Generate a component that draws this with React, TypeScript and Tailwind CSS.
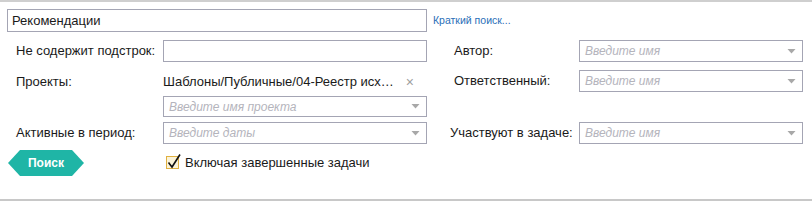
import React from "react";

const font = { fontFamily: '"Liberation Sans", Arial, sans-serif' };

function Arrow() {
  return (
    <svg width="9" height="5" viewBox="0 0 9 5" className="shrink-0">
      <path d="M0.5 0 L8.5 0 L4.5 4.5 Z" fill="#a8a8a8" />
    </svg>
  );
}

function Select({ placeholder, w, h = "h-[22px]" }: { placeholder: string; w: string; h?: string }) {
  return (
    <div className={`${w} ${h} border border-[#a4a5b4] bg-white flex items-center pl-[5px] pr-[6px]`}>
      <span className="flex-1 italic text-[12px] text-[#b4b4bc]">{placeholder}</span>
      <Arrow />
    </div>
  );
}

export default function App() {
  return (
    <div className="w-[812px] h-[201px] bg-white relative overflow-hidden text-[#1a1a1a]" style={font}>
      <div className="h-[2px] bg-[#cfcfcf]" />
      <div className="flex items-center pl-[7px] pt-[7px]">
        <div className="w-[420px] h-[23px] border border-[#a4a5b4] flex items-center pl-[4px] text-[13px]">
          Рекомендации
        </div>
        <span className="ml-[6px] text-[10.5px] text-[#2a6fb8]">Краткий поиск...</span>
      </div>
      <div className="grid grid-cols-[147px_264px_23px_129px_224px] grid-rows-[30px_26px_26px_22px] items-start pl-[16px] mt-[8px] text-[13px]">
        {/* row 1 */}
        <div className="h-[22px] flex items-center">Не содержит подстрок:</div>
        <div className="h-[22px] border border-[#a4a5b4]" />
        <div />
        <div className="h-[22px] flex items-center pl-[4px]">Автор:</div>
        <Select placeholder="Введите имя" w="w-[224px]" />
        {/* row 2 */}
        <div className="h-[22px] flex items-center pt-[2px]">Проекты:</div>
        <div className="h-[22px] flex items-center pt-[2px] pr-[13px]">
          <span className="flex-1">Шаблоны/Публичные/04-Реестр исх…</span>
          <span className="text-[#a0a0a0] text-[14px] leading-none">×</span>
        </div>
        <div />
        <div className="h-[22px] flex items-center pl-[4px]">Ответственный:</div>
        <Select placeholder="Введите имя" w="w-[224px]" />
        {/* row 3 */}
        <div />
        <Select placeholder="Введите имя проекта" w="w-[264px]" h="h-[21px]" />
        <div />
        <div />
        <div />
        {/* row 4 */}
        <div className="h-[22px] flex items-center">Активные в период:</div>
        <Select placeholder="Введите даты" w="w-[264px]" />
        <div />
        <div className="h-[22px] flex items-center">Участвуют в задаче:</div>
        <Select placeholder="Введите имя" w="w-[224px]" />
      </div>
      <div className="flex items-start mt-[6px] pl-[8px]">
        <div className="w-[76px] h-[26px] bg-[#1fb5a6] flex items-center justify-center text-white font-bold text-[12px] [clip-path:polygon(12px_0,64px_0,76px_50%,64px_100%,12px_100%,0_50%)]">
          Поиск
        </div>
        <div className="ml-[82px] mt-[3px] flex items-center">
          <div className="w-[13px] h-[13px] border border-[#e0b040] bg-[#fbf3d8] relative">
            <svg width="16" height="16" viewBox="0 0 16 16" className="absolute -left-[1px] -top-[4px]">
              <path d="M2.5 9.5 L6 14 L14 1.5" stroke="#111" strokeWidth="1.6" fill="none" />
            </svg>
          </div>
          <span className="ml-[6px] text-[13px]">Включая завершенные задачи</span>
        </div>
      </div>
      <div className="absolute bottom-0 left-0 right-0 h-[2px] bg-[#c8c8c8]" />
    </div>
  );
}
